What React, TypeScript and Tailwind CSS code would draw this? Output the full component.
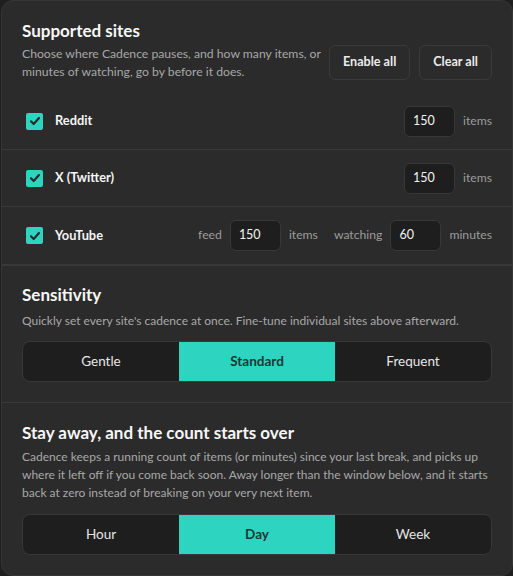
import React, { useState } from 'react';

type Site = {
  id: string;
  name: string;
  enabled: boolean;
};

const font = { fontFamily: 'Lato, "Noto Sans", sans-serif' };

const Checkbox: React.FC<{ checked: boolean; onChange: () => void }> = ({ checked, onChange }) => (
  <button
    onClick={onChange}
    className={`w-[17px] h-[17px] rounded-[2px] flex items-center justify-center ${
      checked ? 'bg-[#2dd4bf]' : 'bg-[#1e1e1e] border border-[#555]'
    }`}
  >
    {checked && (
      <svg width="12" height="12" viewBox="0 0 12 12" fill="none">
        <path d="M2 6.3 L4.7 9 L10 3" stroke="#2a2a2a" strokeWidth="2.2" strokeLinecap="round" strokeLinejoin="round" />
      </svg>
    )}
  </button>
);

const NumberBox: React.FC<{ value: number }> = ({ value }) => (
  <div className="w-[51px] h-[31px] rounded-md bg-[#1e1e1e] border border-[#383838] flex items-center pl-2 text-[12.5px] text-[#f2f2f2]">
    {value}
  </div>
);

const Segmented: React.FC<{ options: string[]; value: string; onChange: (v: string) => void }> = ({
  options,
  value,
  onChange,
}) => (
  <div className="grid grid-cols-3 h-[41px] rounded-lg border border-[#383838] bg-[#1e1e1e] overflow-hidden">
    {options.map((opt) => (
      <button
        key={opt}
        onClick={() => onChange(opt)}
        className={`text-[13.5px] ${
          value === opt ? 'bg-[#2dd4bf] text-[#173a35] font-bold' : 'text-[#e6e6e6]'
        }`}
      >
        {opt}
      </button>
    ))}
  </div>
);

export default function App() {
  const [sites, setSites] = useState<Site[]>([
    { id: 'reddit', name: 'Reddit', enabled: true },
    { id: 'x', name: 'X (Twitter)', enabled: true },
    { id: 'youtube', name: 'YouTube', enabled: true },
  ]);
  const [sensitivity, setSensitivity] = useState('Standard');
  const [reset, setReset] = useState('Day');

  const toggle = (id: string) =>
    setSites((s) => s.map((x) => (x.id === id ? { ...x, enabled: !x.enabled } : x)));

  return (
    <div className="min-h-screen bg-[#1f1f1f]" style={font}>
      <div className="bg-[#2b2b2b] border border-[#363636] rounded-xl ml-[1px] overflow-hidden">
        {/* Supported sites */}
        <section className="border-b-2 border-[#383838]">
          <div className="flex items-end justify-between px-5 pt-[18px] pb-3">
            <div className="w-[305px]">
              <h2 className="text-[17px] font-bold text-[#f7f7f7] leading-6">Supported sites</h2>
              <p className="mt-[2px] text-[12.2px] leading-[18px] text-[#a8a8a8]">
                Choose where Cadence pauses, and how many items, or minutes of watching, go by before it does.
              </p>
            </div>
            <div className="flex gap-[9px] mb-[1px] shrink-0">
              <button className="h-[35px] px-[13px] whitespace-nowrap rounded-md border border-[#3a3a3a] text-[12.6px] font-bold text-[#ececec]">
                Enable all
              </button>
              <button className="h-[35px] px-[13px] whitespace-nowrap rounded-md border border-[#3a3a3a] text-[12.6px] font-bold text-[#ececec]">
                Clear all
              </button>
            </div>
          </div>

          {sites.map((site, i) => (
            <div
              key={site.id}
              className={`flex items-center pl-6 pr-5 h-[57px] ${i < sites.length - 1 ? 'border-b border-[#383838]' : ''}`}
            >
              <Checkbox checked={site.enabled} onChange={() => toggle(site.id)} />
              <span className="ml-3 text-[12.8px] font-bold text-[#f5f5f5]">{site.name}</span>
              <div className="ml-auto flex items-center text-[12.2px] text-[#9c9c9c]">
                {site.id === 'youtube' ? (
                  <>
                    <span className="mr-2">feed</span>
                    <NumberBox value={150} />
                    <span className="ml-2">items</span>
                    <span className="ml-4 mr-2">watching</span>
                    <NumberBox value={60} />
                    <span className="ml-2">minutes</span>
                  </>
                ) : (
                  <>
                    <NumberBox value={150} />
                    <span className="ml-2">items</span>
                  </>
                )}
              </div>
            </div>
          ))}
        </section>

        {/* Sensitivity presets */}
        <section className="px-5 pt-[17px] pb-5 border-b border-[#383838]">
          <h2 className="text-[17px] font-bold text-[#f7f7f7] leading-6">Sensitivity</h2>
          <p className="mt-[5px] mb-[11px] text-[12px] leading-[18px] text-[#a8a8a8]">
            Quickly set every site's cadence at once. Fine-tune individual sites above afterward.
          </p>
          <Segmented options={['Gentle', 'Standard', 'Frequent']} value={sensitivity} onChange={setSensitivity} />
        </section>

        {/* Reset window */}
        <section className="px-5 pt-[18px] pb-5">
          <h2 className="text-[17px] font-bold text-[#f7f7f7] leading-6">Stay away, and the count starts over</h2>
          <p className="mt-[3px] mb-[12px] text-[12px] leading-[18px] text-[#a8a8a8]">
            Cadence keeps a running count of items (or minutes) since your last break, and picks up where it left off
            if you come back soon. Away longer than the window below, and it starts back at zero instead of breaking on
            your very next item.
          </p>
          <Segmented options={['Hour', 'Day', 'Week']} value={reset} onChange={setReset} />
        </section>
      </div>
    </div>
  );
}
